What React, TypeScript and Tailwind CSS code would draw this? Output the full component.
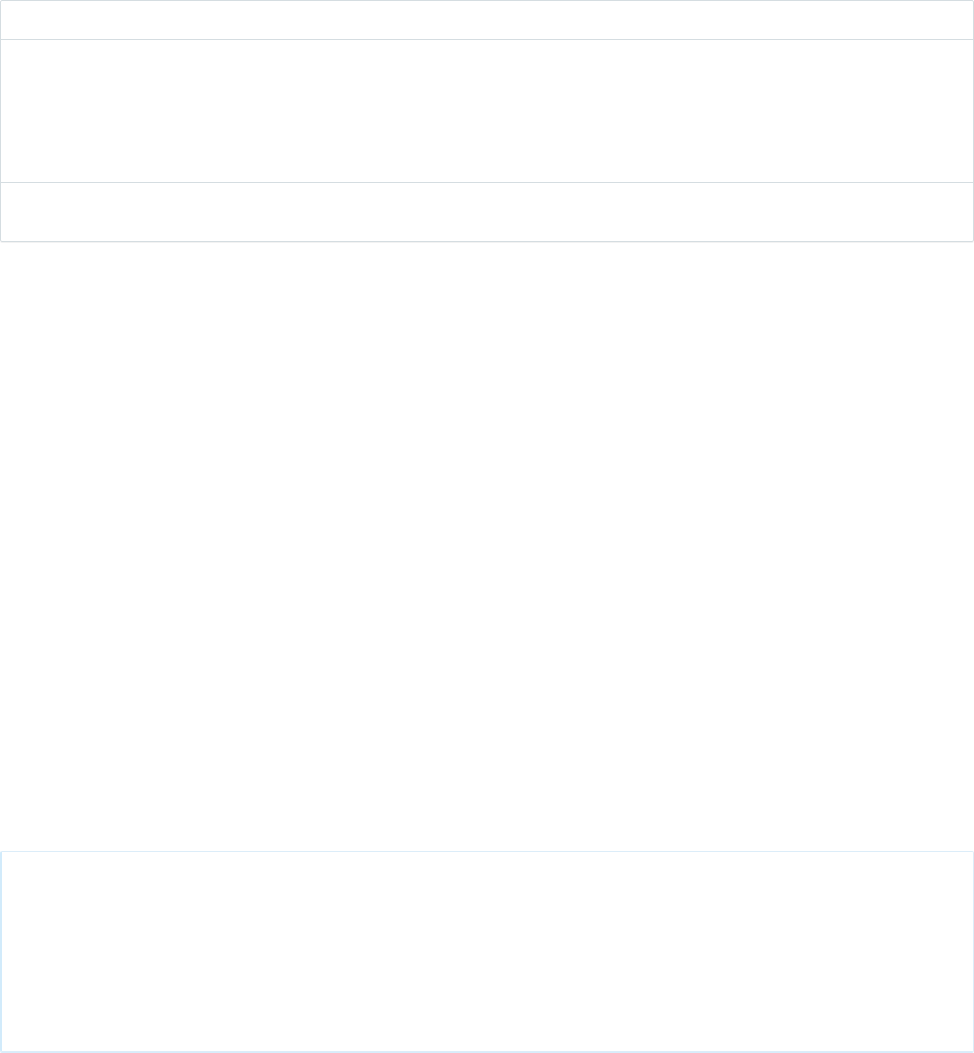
export default function App() {
  return (
    <div className="w-[974px] h-[1053px] bg-white font-['Liberation_Sans',sans-serif] flex flex-col">
      {/* top card */}
      <div className="border border-[#d5dde1] rounded-[2px] flex flex-col shadow-[0_1px_0_0_rgba(0,0,0,0.05)]">
        <div className="h-[39px] border-b border-[#d5dde1]" />
        <div className="h-[143px] border-b border-[#d5dde1]" />
        <div className="h-[58px]" />
      </div>

      <div className="h-[609px] shrink-0" />

      {/* bottom card */}
      <div className="h-[201px] shrink-0 border border-[#dcedf9] border-l-2 border-l-[#d2ebfb] rounded-[2px] shadow-[0_1px_0_0_rgba(200,230,250,0.7)]" />
    </div>
  );
}
